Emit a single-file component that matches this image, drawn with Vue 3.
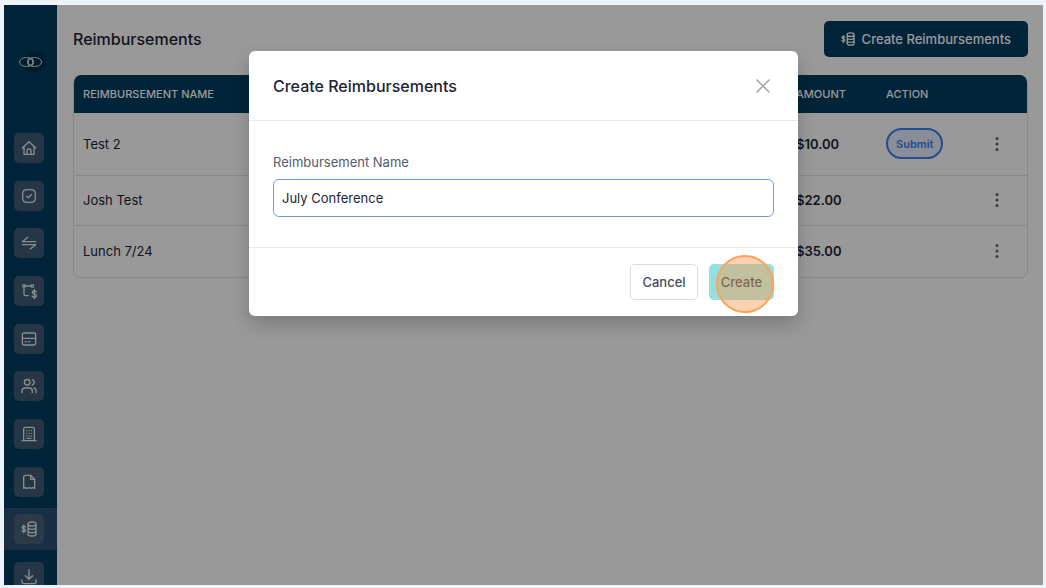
<script setup>
import { ref } from 'vue'

const name = ref('July Conference')

const coins =
  'M16.500 1.500c3.300 0 6 1.300 6 3s-2.700 3-6 3-6-1.300-6-3 2.700-3 6-3zM10.500 4.500v15c0 1.700 2.700 3 6 3s6-1.300 6-3v-15M10.500 9.500c0 1.700 2.700 3 6 3s6-1.300 6-3M10.500 14.500c0 1.700 2.700 3 6 3s6-1.300 6-3'

const dollar = 'M6.500 8.900C6 8.100 5.100 7.700 4.100 7.700c-1.500 0-2.500.800-2.500 1.900 0 2.900 5.100 1.600 5.100 4.500 0 1.200-1.100 2-2.600 2-1.200 0-2.200-.500-2.700-1.400M4.100 6.200v11.600'

const nav = [
  { label: 'Home', paths: ['M2 12L12 2.500 22 12M4.500 10V21.500h15V10M9 21.500v-5a3 3 0 0 1 6 0v5'] },
  { label: 'Approvals', paths: ['M9 2.500h6c4.500 0 6.500 2 6.500 6.500v6c0 4.500-2 6.500-6.500 6.500H9c-4.500 0-6.500-2-6.500-6.500V9c0-4.500 2-6.500 6.500-6.500z', 'M8.500 12.200l2.500 2.300 4.500-4.500'] },
  { label: 'Transfers', paths: ['M22 10H2l8-6.500M2 14.500h20L14 21'] },
  { label: 'Bill pay', paths: ['M6 4.500h9M4.500 7v9.500c0 1.500 1 2.500 2.500 2.500h4', 'M6.500 4.500a2 2 0 1 1-4 0 2 2 0 0 1 4 0zM19 4.500a2 2 0 1 1-4 0 2 2 0 0 1 4 0z', 'M23 13.200c-.700-1-1.800-1.500-3-1.500-1.800 0-3 .900-3 2.300 0 3.200 6.200 1.700 6.200 5 0 1.400-1.300 2.400-3.200 2.400-1.500 0-2.700-.600-3.400-1.700M20 9.500v14'] },
  { label: 'Cards', paths: ['M4.500 3h15A2.500 2.500 0 0 1 22 5.500v13a2.500 2.500 0 0 1-2.500 2.500h-15A2.500 2.500 0 0 1 2 18.500v-13A2.500 2.500 0 0 1 4.500 3zM2 11h20M6.500 16h1.500M11.500 16h1.500'] },
  { label: 'People', paths: ['M13.500 6.500a4.200 4.200 0 1 1-8.400 0 4.200 4.200 0 0 1 8.400 0zM1.500 22v-2.500c0-2.500 2-4.500 4.500-4.500h6.500c2.500 0 4.500 2 4.500 4.500V22', 'M17 2.500a4.200 4.200 0 0 1 0 8M19.500 15c2 .600 3.200 2.300 3.200 4.500V22'] },
  { label: 'Company', paths: ['M1.500 22h21M4 22V4.500a2.500 2.500 0 0 1 2.500-2.500h11A2.500 2.500 0 0 1 20 4.500V22', 'M8.500 7h.100M12 7h.100M15.500 7h.100M8.500 11h.100M12 11h.100M15.500 11h.100M8.500 15h.100M12 15h.100M15.500 15h.100M9 18.500h6'] },
  { label: 'Documents', paths: ['M14.500 2H6.500a2.500 2.500 0 0 0-2.500 2.500V21.500l2.700-1.200 2.700 1.500 2.800-1.500 2.700 1.500 2.700-1.500 2.900 1.200V8zM14.500 2v6H21'] },
  { label: 'Reimbursements', paths: [coins, dollar], active: true },
  { label: 'Downloads', paths: ['M12 1.500v14M6.500 10l5.500 5.500 5.500-5.500M1.500 16.500v3A2.500 2.500 0 0 0 4 22h16a2.500 2.500 0 0 0 2.500-2.500v-3'] },
]

const rows = [
  { name: 'Test 2', amount: '$10.00', submit: true },
  { name: 'Josh Test', amount: '$22.00' },
  { name: 'Lunch 7/24', amount: '$35.00' },
]
</script>

<template>
  <div class="stage">
    <div class="window">
      <aside class="sidebar">
        <a class="logo" href="#" aria-label="Dashboard">
          <svg viewBox="0 0 32 24" width="32" height="24" fill="none">
            <circle cx="19" cy="12" r="11" class="halo" />
            <ellipse cx="11.500" cy="12" rx="7" ry="4.500" stroke="currentColor" />
            <ellipse cx="19.500" cy="12" rx="7" ry="4.500" stroke="currentColor" />
            <ellipse cx="15.500" cy="12" rx="2.500" ry="3.500" stroke="currentColor" stroke-width="1.500" />
          </svg>
        </a>
        <nav>
          <a v-for="item in nav" :key="item.label" href="#" :aria-label="item.label" class="nav-item" :class="{ active: item.active }">
            <span class="tile">
              <svg class="icon" viewBox="0 0 24 24" width="16" height="16">
                <path v-for="d in item.paths" :key="d" :d="d" />
              </svg>
            </span>
          </a>
        </nav>
      </aside>

      <main>
        <header class="top">
          <h1>Reimbursements</h1>
          <button type="button" class="create-top">
            <svg class="icon" viewBox="0 0 24 24" width="14" height="14">
              <path :d="coins" />
              <path :d="dollar" />
            </svg>
            Create Reimbursements
          </button>
        </header>

        <div class="card">
          <table>
            <thead>
              <tr>
                <th>REIMBURSEMENT NAME</th>
                <th class="amount-col">AMOUNT</th>
                <th class="action-col">ACTION</th>
                <th class="menu-col"></th>
              </tr>
            </thead>
            <tbody>
              <tr v-for="row in rows" :key="row.name">
                <td>{{ row.name }}</td>
                <td class="amount">{{ row.amount }}</td>
                <td><button v-if="row.submit" type="button" class="submit">Submit</button></td>
                <td class="menu-cell">
                  <button type="button" class="kebab" :aria-label="'Options for ' + row.name">
                    <svg viewBox="0 0 4 16" width="4" height="16" fill="currentColor">
                      <circle cx="2" cy="2.500" r="1.500" />
                      <circle cx="2" cy="8" r="1.500" />
                      <circle cx="2" cy="13.500" r="1.500" />
                    </svg>
                  </button>
                </td>
              </tr>
            </tbody>
          </table>
        </div>
      </main>

      <div class="overlay">
        <form class="modal" role="dialog" aria-labelledby="modal-title" @submit.prevent>
          <header class="modal-head">
            <h2 id="modal-title">Create Reimbursements</h2>
            <button type="button" class="close" aria-label="Close">
              <svg viewBox="0 0 14 14" width="14" height="14" fill="none" stroke="currentColor" stroke-width="1.500" stroke-linecap="round">
                <path d="M1 1l12 12M13 1L1 13" />
              </svg>
            </button>
          </header>
          <div class="modal-body">
            <label for="reimbursement-name">Reimbursement Name</label>
            <input id="reimbursement-name" v-model="name" type="text" />
          </div>
          <footer class="modal-foot">
            <button type="button" class="cancel">Cancel</button>
            <div class="click-target">
              <button type="submit" class="create">Create</button>
              <span class="click-ring"></span>
            </div>
          </footer>
        </form>
      </div>
    </div>
  </div>
</template>

<style>
body {
  background: #eef3f9;
}
</style>

<style scoped>
* {
  box-sizing: border-box;
}
.stage {
  height: 100vh;
  padding: 5px 3px 3px 4px;
  background: #eef3f9;
  font-family: Inter, "Liberation Sans", sans-serif;
  font-size: 13px;
  color: #1e2333;
}
button,
input {
  font: inherit;
}
.window {
  position: relative;
  display: flex;
  height: 100%;
  overflow: hidden;
  background: #fff;
}
.sidebar {
  flex: none;
  display: flex;
  flex-direction: column;
  width: 53px;
  background: #023c60;
}
.logo {
  display: flex;
  height: 24px;
  margin: 45px 0 53px 11px;
  color: #d3dde4;
}
.halo {
  fill: #03304f;
}
nav {
  flex: 1;
  display: flex;
  flex-direction: column;
  justify-content: space-between;
  margin-bottom: -13px;
}
.nav-item {
  display: flex;
  padding: 6px 0 6px 10px;
}
.nav-item.active {
  background: #2a5072;
}
.tile {
  display: flex;
  align-items: center;
  justify-content: center;
  width: 30px;
  height: 30px;
  border-radius: 5px;
  background: #3f5c76;
  color: #e6e9ed;
}
.active .tile {
  background: #48627b;
}
.icon {
  overflow: visible;
  fill: none;
  stroke: currentColor;
  stroke-width: 2;
  stroke-linecap: round;
  stroke-linejoin: round;
}
main {
  flex: 1;
  min-width: 0;
  padding: 16px 15px 16px 16px;
}
.top {
  display: flex;
  align-items: center;
  justify-content: space-between;
  margin-bottom: 18px;
}
h1,
h2 {
  margin: 0;
  font-weight: 500;
  font-size: 16px;
}
.create-top {
  display: flex;
  align-items: center;
  justify-content: center;
  gap: 7px;
  height: 36px;
  padding: 0 17px;
  border: 0;
  border-radius: 5px;
  background: #023c60;
  color: #fff;
  font-weight: 500;
}
.card {
  overflow: hidden;
  border: 1px solid #e2e5ea;
  border-top: 0;
  border-radius: 8px;
}
table {
  width: 100%;
  table-layout: fixed;
  border-collapse: collapse;
}
th {
  height: 38px;
  padding: 0 9px;
  background: #023c60;
  color: #fff;
  font-size: 11px;
  font-weight: 500;
  text-align: left;
  white-space: nowrap;
}
.amount-col {
  width: 90px;
}
.action-col {
  width: 90px;
}
.menu-col {
  width: 60px;
}
td {
  height: 50px;
  padding: 0 9px;
}
tbody tr:first-child td {
  height: 62px;
}
tbody tr:last-child td {
  height: 52px;
}
tbody tr + tr {
  border-top: 1px solid #e2e5ea;
}
.amount {
  font-weight: 600;
}
.submit {
  display: block;
  height: 31px;
  padding: 0 8px;
  border: 2px solid #3f7fee;
  border-radius: 16px;
  background: #e4edff;
  color: #3f7fee;
  font-size: 11px;
  font-weight: 600;
}
.menu-cell {
  padding: 0;
}
.kebab {
  display: flex;
  justify-content: center;
  width: 100%;
  padding: 0;
  border: 0;
  background: none;
  color: #5f6678;
}
.overlay {
  position: absolute;
  inset: 0;
  display: flex;
  align-items: flex-start;
  justify-content: center;
  padding-top: 46px;
  background: rgba(0, 0, 0, 0.4);
}
.modal {
  width: 549px;
  border-radius: 6px;
  background: #fff;
  box-shadow: 0 8px 18px rgba(0, 0, 0, 0.2);
}
.modal-head {
  display: flex;
  align-items: center;
  justify-content: space-between;
  height: 70px;
  padding: 0 28px 0 24px;
  border-bottom: 1px solid #e8ebef;
}
.close {
  display: flex;
  padding: 0;
  border: 0;
  background: none;
  color: #9ca0ab;
}
.modal-body {
  padding: 32px 24px 30px;
}
label {
  display: block;
  margin-bottom: 8px;
  color: #535b6d;
  line-height: 18px;
}
input {
  display: block;
  width: 100%;
  height: 38px;
  padding: 0 8px;
  border: 1px solid #6c9fd6;
  border-radius: 6px;
  outline: 0;
  background: #fff;
  color: #1e2333;
}
.modal-foot {
  display: flex;
  justify-content: flex-end;
  gap: 11px;
  padding: 16px 24px;
  border-top: 1px solid #e8ebef;
}
.cancel,
.create {
  height: 36px;
  border: 1px solid #d9dce2;
  border-radius: 5px;
  background: #fff;
  color: #454c61;
  font-weight: 500;
}
.cancel {
  width: 68px;
  padding: 0;
}
.create {
  display: block;
  width: 65px;
  padding: 0;
  border: 0;
  background: #94dfdf;
  color: #1e3a50;
}
.click-target {
  position: relative;
}
.click-ring {
  position: absolute;
  top: -9px;
  left: 7px;
  width: 58px;
  height: 58px;
  border: 2px solid #f9a45a;
  border-radius: 50%;
  background: rgba(249, 158, 84, 0.45);
}
</style>
